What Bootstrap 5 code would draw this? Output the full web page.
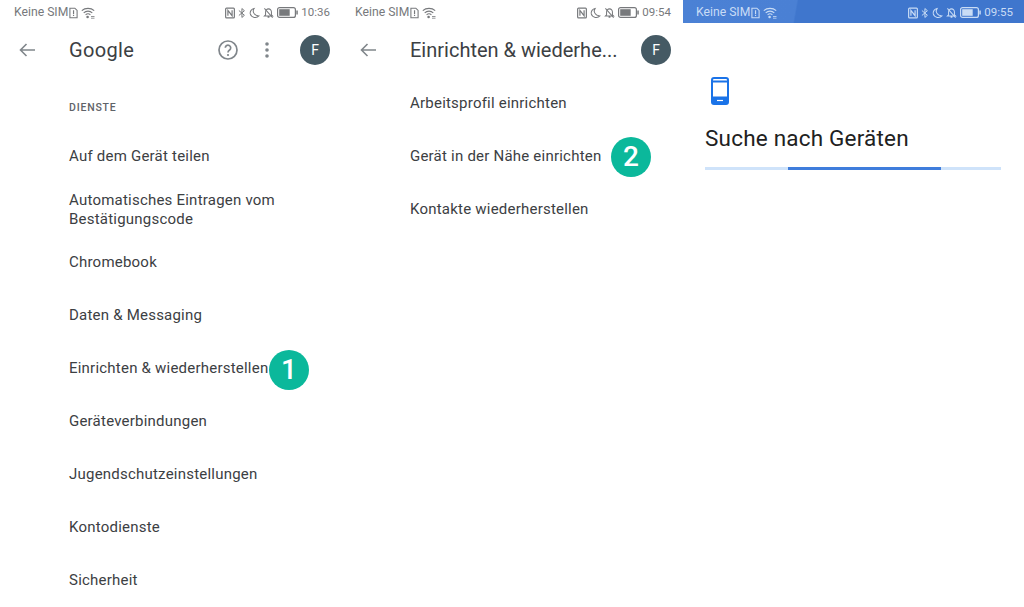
<!DOCTYPE html>
<html lang="de">
  <head>
    <meta charset="UTF-8" />
    <meta name="viewport" content="width=device-width, initial-scale=1.0" />
    <title>Gerät einrichten</title>
    <link
      rel="stylesheet"
      href="https://cdn.jsdelivr.net/npm/bootstrap@5.3.0/dist/css/bootstrap.min.css"
    />
    <style>
      body {
        width: 1024px;
        height: 607px;
        overflow: hidden;
        background: #fff;
        font-family: "Roboto", "Liberation Sans", sans-serif;
        color: #202124;
      }
      .phone {
        width: 341px;
        height: 607px;
        overflow: hidden;
        flex: none;
      }
      .phone-last {
        width: 342px;
        padding-left: 1px;
      }
      .status {
        height: 23px;
        padding: 2px 11px 0 14px;
        font-size: 12.2px;
        color: #77797c;
      }
      .status svg {
        display: block;
        flex: none;
      }
      .status-blue {
        padding-left: 13px;
        color: #c9dcf5;
        background: linear-gradient(100deg, #4b81d5 0%, #4a80d4 33%, #3f76cd 33.5%, #3f76cd 100%);
      }
      .status-sim {
        margin-left: 1px;
      }
      .status-wifi {
        margin-left: 3px;
      }
      .status-right {
        gap: 3px;
      }
      .status-clock {
        font-size: 11.5px;
      }
      .topbar {
        height: 54px;
        padding: 0 11px 0 19px;
      }
      .topbar-title {
        margin-left: 34px;
        font-size: 20px;
        letter-spacing: 0.35px;
        white-space: nowrap;
        color: #3c4043;
      }
      .topbar-title-long {
        letter-spacing: 0;
      }
      .topbar-back {
        color: #80868b;
      }
      .topbar-help {
        color: #80868b;
        margin-right: 27px;
      }
      .topbar-dots {
        color: #80868b;
        margin-right: 31px;
      }
      .avatar {
        width: 30px;
        height: 30px;
        background: #455a64;
        font-size: 14px;
      }
      .section-label {
        margin: 23px 0 0 69px;
        height: 30px;
        font-size: 10.5px;
        font-weight: 500;
        letter-spacing: 0.8px;
        color: #5f6368;
      }
      .entry {
        min-height: 53px;
        padding: 0 12px 0 69px;
        font-size: 15px;
        line-height: 19px;
        letter-spacing: 0.22px;
        color: #3c4043;
      }
      .entry-text {
        position: relative;
      }
      .step {
        position: absolute;
        top: 50%;
        width: 40px;
        height: 40px;
        margin-top: -20px;
        background: #0bb89b;
        color: #fff;
        font-size: 28px;
        font-weight: 500;
      }
      .step-low {
        margin-top: -19px;
      }
      .search-icon {
        margin: 54px 0 0 28px;
      }
      .search-title {
        margin: 17px 0 0 22px;
        font-size: 22.5px;
        line-height: 32px;
        letter-spacing: 0.2px;
        font-weight: 400;
        color: #212121;
      }
      .scan-track {
        margin: 13px 0 0 22px;
        width: 296px;
        height: 3px;
        background: #cfe3fa;
      }
      .scan-fill {
        margin-left: 83px;
        width: 153px;
        background: #3f7ddc;
      }
    </style>
  </head>
  <body>
    <svg width="0" height="0" class="position-absolute">
      <symbol id="ic-sim" viewBox="0 0 10 12">
        <path d="M1 .7h5.500L9 3.200v8H1z" fill="none" stroke="currentColor" stroke-width="1.200" />
        <path d="M4.400 3h1.300v4H4.400zM4.400 8h1.300v1.400H4.400z" fill="currentColor" />
      </symbol>
      <symbol id="ic-wifi" viewBox="0 0 14 12">
        <path d="M.8 3.700C4.200.6 9.800.6 13.200 3.700M2.700 5.800c2.400-2.200 6.200-2.200 8.600 0M4.600 7.800c1.400-1.200 3.400-1.200 4.800 0" fill="none" stroke="currentColor" stroke-width="1.100" />
        <circle cx="6.600" cy="10" r="1.300" fill="currentColor" />
        <path d="M10 9.500h3.500M10 11.200h3.500" stroke="currentColor" stroke-width=".8" />
      </symbol>
      <symbol id="ic-nfc" viewBox="0 0 11 12">
        <rect x=".7" y=".7" width="9.600" height="10.600" rx="1" fill="none" stroke="currentColor" stroke-width="1.300" />
        <path d="M3.200 9V3.200L7.800 9V3" fill="none" stroke="currentColor" stroke-width="1.300" />
      </symbol>
      <symbol id="ic-bt" viewBox="0 0 9 12">
        <path d="M1 3.200l6.200 5.400L4.400 11V1l2.800 2.400L1 8.800" fill="none" stroke="currentColor" stroke-width="1.100" />
      </symbol>
      <symbol id="ic-moon" viewBox="0 0 12 12">
        <path d="M5.600 1C3.400 4 5.200 9 10.800 9.200 8.400 12 2.600 11.400 1.400 7 .8 4.400 2.800 1.400 5.600 1z" fill="none" stroke="currentColor" stroke-width="1.100" />
      </symbol>
      <symbol id="ic-bell" viewBox="0 0 12 12">
        <path d="M6 1.500c-2 0-3.200 1.500-3.200 3.500v3L1.500 9.300h9L9.200 8V5C9.200 3 8 1.500 6 1.500zM5 10.500h2" fill="none" stroke="currentColor" stroke-width="1.100" />
        <path d="M1.500 1l9 10" stroke="currentColor" stroke-width="1.100" />
      </symbol>
      <symbol id="ic-back" viewBox="0 0 16 14">
        <path d="M16 7H1.500M7.500 1L1.500 7l6 6" fill="none" stroke="currentColor" stroke-width="1.600" />
      </symbol>
      <symbol id="ic-battery" viewBox="0 0 21 11">
        <rect x=".6" y=".6" width="17.800" height="9.800" rx="2" fill="none" stroke="currentColor" stroke-width="1.200" />
        <rect x="2.200" y="2.200" width="10.500" height="6.600" fill="currentColor" />
        <rect x="19.300" y="3.500" width="1.500" height="4" fill="currentColor" />
      </symbol>
    </svg>

    <main class="d-flex">
      <section class="phone">
        <div class="status d-flex align-items-center">
          <span>Keine SIM</span>
          <svg width="9" height="12" class="status-sim"><use href="#ic-sim" /></svg>
          <svg width="14" height="12" class="status-wifi"><use href="#ic-wifi" /></svg>
          <div class="status-right d-flex align-items-center ms-auto">
            <svg width="10" height="12"><use href="#ic-nfc" /></svg>
            <svg width="8" height="12"><use href="#ic-bt" /></svg>
            <svg width="11" height="12"><use href="#ic-moon" /></svg>
            <svg width="11" height="12"><use href="#ic-bell" /></svg>
            <svg width="21" height="11"><use href="#ic-battery" /></svg>
            <span class="status-clock">10:36</span>
          </div>
        </div>
        <header class="topbar d-flex align-items-center">
          <svg width="16" height="14" class="topbar-back"><use href="#ic-back" /></svg>
          <div class="topbar-title me-auto">Google</div>
          <svg width="20" height="20" viewBox="0 0 20 20" class="topbar-help">
            <circle cx="10" cy="10" r="9" fill="none" stroke="currentColor" stroke-width="1.700" />
            <path d="M7.300 7.800a2.700 2.700 0 1 1 4.300 2.200c-1 .7-1.600 1.100-1.600 2.500" fill="none" stroke="currentColor" stroke-width="1.700" />
            <circle cx="10" cy="15" r="1.100" fill="currentColor" />
          </svg>
          <svg width="4" height="16" viewBox="0 0 4 16" class="topbar-dots">
            <circle cx="2" cy="2" r="1.800" fill="currentColor" />
            <circle cx="2" cy="8" r="1.800" fill="currentColor" />
            <circle cx="2" cy="14" r="1.800" fill="currentColor" />
          </svg>
          <div class="avatar rounded-circle d-flex align-items-center justify-content-center text-white">F</div>
        </header>
        <div class="section-label text-uppercase">Dienste</div>
        <div class="entry d-flex align-items-center">Auf dem Gerät teilen</div>
        <div class="entry d-flex align-items-center">Automatisches Eintragen vom<br />Bestätigungscode</div>
        <div class="entry d-flex align-items-center">Chromebook</div>
        <div class="entry d-flex align-items-center">Daten &amp; Messaging</div>
        <div class="entry d-flex align-items-center">
          <span class="entry-text">Einrichten &amp; wiederherstellen
            <span class="step step-low rounded-circle d-flex align-items-center justify-content-center" style="left: 200px">1</span>
          </span>
        </div>
        <div class="entry d-flex align-items-center">Geräteverbindungen</div>
        <div class="entry d-flex align-items-center">Jugendschutzeinstellungen</div>
        <div class="entry d-flex align-items-center">Kontodienste</div>
        <div class="entry d-flex align-items-center">Sicherheit</div>
      </section>

      <section class="phone">
        <div class="status d-flex align-items-center">
          <span>Keine SIM</span>
          <svg width="9" height="12" class="status-sim"><use href="#ic-sim" /></svg>
          <svg width="14" height="12" class="status-wifi"><use href="#ic-wifi" /></svg>
          <div class="status-right d-flex align-items-center ms-auto">
            <svg width="10" height="12"><use href="#ic-nfc" /></svg>
            <svg width="11" height="12"><use href="#ic-moon" /></svg>
            <svg width="11" height="12"><use href="#ic-bell" /></svg>
            <svg width="21" height="11"><use href="#ic-battery" /></svg>
            <span class="status-clock">09:54</span>
          </div>
        </div>
        <header class="topbar d-flex align-items-center">
          <svg width="16" height="14" class="topbar-back"><use href="#ic-back" /></svg>
          <div class="topbar-title topbar-title-long me-auto">Einrichten &amp; wiederhe...</div>
          <div class="avatar rounded-circle d-flex align-items-center justify-content-center text-white">F</div>
        </header>
        <div class="entry d-flex align-items-center">Arbeitsprofil einrichten</div>
        <div class="entry d-flex align-items-center">
          <span class="entry-text">Gerät in der Nähe einrichten
            <span class="step rounded-circle d-flex align-items-center justify-content-center" style="left: 201px">2</span>
          </span>
        </div>
        <div class="entry d-flex align-items-center">Kontakte wiederherstellen</div>
      </section>

      <section class="phone phone-last">
        <div class="status status-blue d-flex align-items-center">
          <span>Keine SIM</span>
          <svg width="9" height="12" class="status-sim"><use href="#ic-sim" /></svg>
          <svg width="14" height="12" class="status-wifi"><use href="#ic-wifi" /></svg>
          <div class="status-right d-flex align-items-center ms-auto">
            <svg width="10" height="12"><use href="#ic-nfc" /></svg>
            <svg width="8" height="12"><use href="#ic-bt" /></svg>
            <svg width="11" height="12"><use href="#ic-moon" /></svg>
            <svg width="11" height="12"><use href="#ic-bell" /></svg>
            <svg width="21" height="11"><use href="#ic-battery" /></svg>
            <span class="status-clock">09:55</span>
          </div>
        </div>
        <svg class="search-icon d-block" width="18" height="28" viewBox="0 0 18 28">
          <rect x="1" y="1" width="16" height="26" rx="2" fill="none" stroke="#1a73e8" stroke-width="2" />
          <path d="M1 4.500h16M1 20.500h16" stroke="#1a73e8" stroke-width="2" />
          <path d="M1 21h16v5H1z" fill="#1a73e8" />
          <path d="M6 23.500h6" stroke="#fff" stroke-width="1.200" />
        </svg>
        <h1 class="search-title">Suche nach Geräten</h1>
        <div class="scan-track d-flex">
          <div class="scan-fill"></div>
        </div>
      </section>
    </main>

    <script src="https://cdn.jsdelivr.net/npm/bootstrap@5.3.0/dist/js/bootstrap.bundle.min.js"></script>
  </body>
</html>
